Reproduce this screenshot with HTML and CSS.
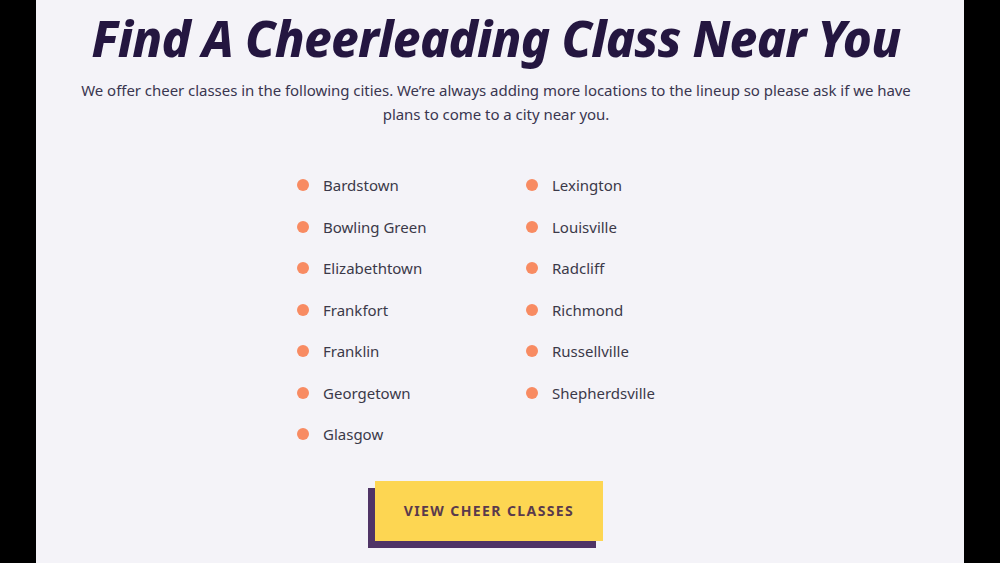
FILE: index.html
```html
<!DOCTYPE html>
<html lang="en">
<head>
<meta charset="utf-8">
<title>Find A Cheerleading Class Near You</title>
<link rel="stylesheet" href="styles.css">
</head>
<body>
<main class="page">
  <h1 class="title">Find A Cheerleading Class Near You</h1>
  <p class="intro">We offer cheer classes in the following cities. We’re always adding more locations to the lineup so please ask if we have plans to come to a city near you.</p>
  <ul class="cities">
    <li>Bardstown</li>
    <li>Bowling Green</li>
    <li>Elizabethtown</li>
    <li>Frankfort</li>
    <li>Franklin</li>
    <li>Georgetown</li>
    <li>Glasgow</li>
    <li>Lexington</li>
    <li>Louisville</li>
    <li>Radcliff</li>
    <li>Richmond</li>
    <li>Russellville</li>
    <li>Shepherdsville</li>
  </ul>
  <div class="cta-wrap">
    <a class="cta" href="#">VIEW CHEER CLASSES</a>
  </div>
</main>
</body>
</html>
```
FILE: styles.css
```css
html, body {
  margin: 0;
  padding: 0;
  background: #000;
}
body {
  display: flex;
  justify-content: center;
  height: 563px;
  overflow: hidden;
}
.page {
  box-sizing: border-box;
  width: 928px;
  height: 563px;
  padding-right: 8px;
  background: #f4f3f8;
  display: flex;
  flex-direction: column;
  align-items: center;
  font-family: "Noto Sans", "Open Sans", sans-serif;
  color: #36334a;
}
.title {
  margin: 8px 0 0;
  font-size: 49px;
  line-height: 60px;
  font-weight: 800;
  font-style: italic;
  color: #241640;
  letter-spacing: -0.75px;
  white-space: nowrap;
}
.intro {
  margin: 10px 0 0;
  width: 850px;
  text-align: center;
  font-size: 15px;
  line-height: 24px;
  color: #3a3650;
  letter-spacing: -0.04px;
}
.cities {
  list-style: none;
  margin: 47px 0 0;
  padding: 0 0 0 261px;
  align-self: stretch;
  display: grid;
  grid-auto-flow: column;
  grid-template-rows: repeat(7, 41.5px);
  grid-template-columns: 229px 229px;
}
.cities li {
  display: flex;
  align-items: center;
  height: 24px;
  font-size: 15px;
  color: #3b3949;
}
.cities li::before {
  content: "";
  width: 12px;
  height: 12px;
  border-radius: 50%;
  background: #f88b62;
  margin-right: 14px;
  flex: none;
}
.cta-wrap {
  margin-top: 17px;
  padding-right: 14px;
}
.cta {
  display: block;
  width: 228px;
  height: 60px;
  line-height: 60px;
  text-align: center;
  background: #fdd652;
  color: #5a3a4c;
  font-weight: 700;
  font-size: 14px;
  letter-spacing: 1.4px;
  text-decoration: none;
  box-shadow: -7px 7px 0 #4f3466;
}
```
